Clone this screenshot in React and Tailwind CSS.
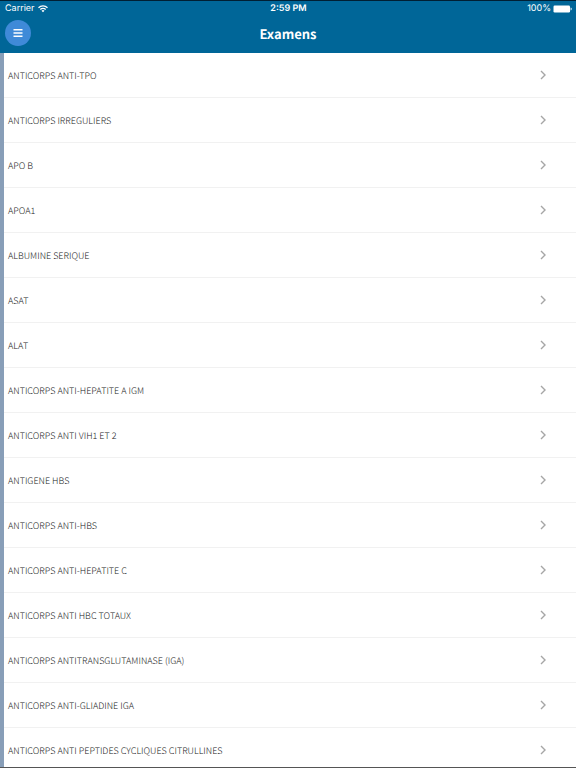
const examens = [
    'ANTICORPS ANTI-TPO',
    'ANTICORPS IRREGULIERS',
    'APO B',
    'APOA1',
    'ALBUMINE SERIQUE',
    'ASAT',
    'ALAT',
    'ANTICORPS ANTI-HEPATITE A IGM',
    'ANTICORPS ANTI VIH1 ET 2',
    'ANTIGENE HBS',
    'ANTICORPS ANTI-HBS',
    'ANTICORPS ANTI-HEPATITE C',
    'ANTICORPS ANTI HBC TOTAUX',
    'ANTICORPS ANTITRANSGLUTAMINASE (IGA)',
    'ANTICORPS ANTI-GLIADINE IGA',
    'ANTICORPS ANTI PEPTIDES CYCLIQUES CITRULLINES',
];

const WifiIcon = () => (
    <svg viewBox="0 0 10 8" className="w-[10px] h-2" fill="none" stroke="currentColor" strokeWidth="1.3" aria-hidden="true">
        <path d="M0.5 2.7a6.4 6.4 0 0 1 9 0" />
        <path d="M2.3 4.5a3.8 3.8 0 0 1 5.4 0" />
        <path d="M5 7.3L3.5 5.8a2.1 2.1 0 0 1 3 0z" fill="currentColor" stroke="none" />
    </svg>
);

const BatteryIcon = () => (
    <svg viewBox="0 0 19 8" className="w-[19px] h-2" fill="currentColor" aria-hidden="true">
        <rect x="0.5" y="0.5" width="16.5" height="7" rx="1.2" />
        <path d="M17.6 2.6c0.8 0.2 1.1 0.8 1.1 1.4s-0.3 1.2-1.1 1.4z" />
    </svg>
);

const StatusBar = () => (
    <div className="grid grid-cols-3 items-center h-[15px] pl-[5px] pr-1 font-['Inter','Liberation_Sans',sans-serif] text-[9px] leading-4">
        <div className="flex items-center gap-[3px]">
            <span>Carrier</span>
            <WifiIcon />
        </div>
        <span className="text-center font-semibold">2:59 PM</span>
        <div className="flex items-center justify-end gap-[2px]">
            <span>100%</span>
            <BatteryIcon />
        </div>
    </div>
);

const Header = () => (
    <header className="shrink-0 bg-[#006698] border-t border-[#001f33] text-white">
        <StatusBar />
        <div className="grid grid-cols-[26px_1fr_26px] items-center h-[37px] px-[5px] pb-[3px]">
            <button type="button" aria-label="Menu" className="flex items-center justify-center size-[26px] rounded-full bg-[#3f8ad8]">
                <svg viewBox="0 0 10 8" className="w-[10px] h-2" fill="currentColor" aria-hidden="true">
                    <path d="M0.5 0h9v1.4h-9zM0.5 3.3h9v1.4h-9zM0.5 6.6h9V8h-9z" />
                </svg>
            </button>
            <h1 className="pt-[2px] text-center text-[13px] leading-5 font-bold">Examens</h1>
        </div>
    </header>
);

const ExamenItem = ({ nom }) => (
    <li className="border-b border-[#f1f1f1]">
        <a href="#" className="flex items-center justify-between h-11 pl-1 pr-[29px]">
            <span className="pt-[2px] text-[9px] leading-4 font-light text-[#222]">{nom}</span>
            <svg viewBox="0 0 8 10" className="w-2 h-[10px] text-[#a6a6a6]" fill="none" stroke="currentColor" strokeWidth="1.4" aria-hidden="true">
                <path d="M2 1l4 4-4 4" />
            </svg>
        </a>
    </li>
);

const App = () => (
    <div className="flex flex-col h-screen overflow-hidden bg-white border-b border-[#555] font-['Noto_Sans_CJK_JP','Noto_Sans',sans-serif] [text-rendering:geometricPrecision]">
        <Header />
        <main className="flex-1 min-h-0 overflow-hidden border-l-4 border-[#889eb8]">
            <ul>
                {examens.map((nom) => <ExamenItem key={nom} nom={nom} />)}
            </ul>
        </main>
    </div>
);

export default App;
